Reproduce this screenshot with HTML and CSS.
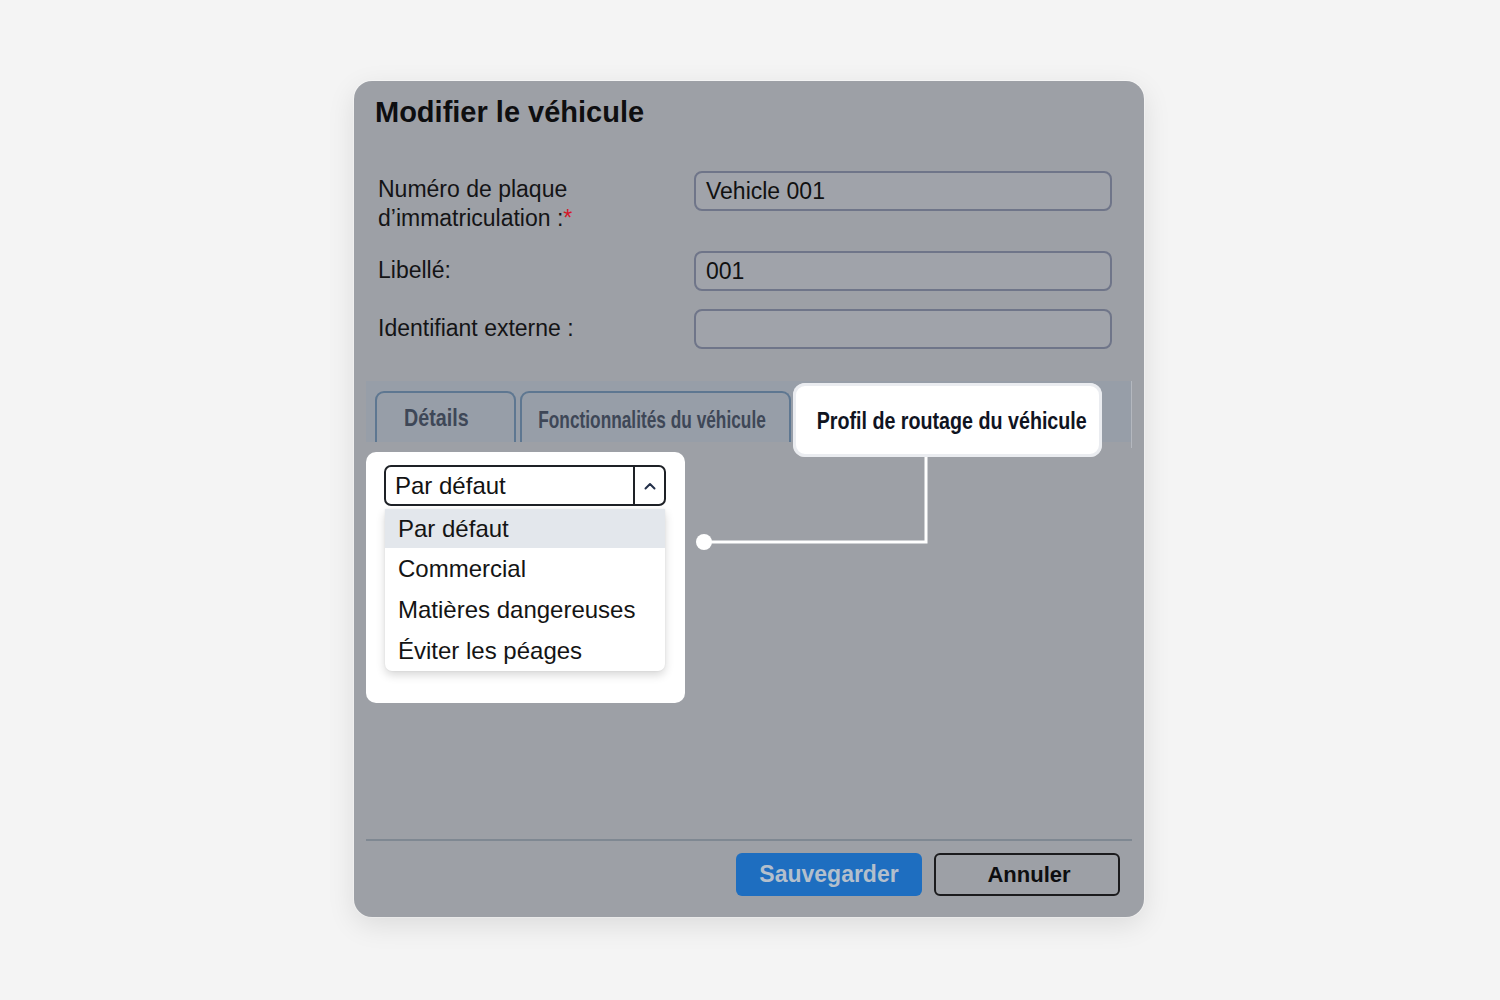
FILE: index.html
```
<!DOCTYPE html>
<html lang="fr">
<head>
<meta charset="utf-8">
<title>Modifier le véhicule</title>
<link rel="stylesheet" href="styles.css">
</head>
<body>
<div class="page">
  <div class="dialog">
    <h1 class="title">Modifier le véhicule</h1>
    <div class="form">
      <div class="row row-plate">
        <label class="label">Numéro de plaque<br>d’immatriculation :<span class="req">*</span></label>
        <div class="input">Vehicle 001</div>
      </div>
      <div class="row row-label">
        <label class="label">Libellé:</label>
        <div class="input">001</div>
      </div>
      <div class="row row-ext">
        <label class="label">Identifiant externe :</label>
        <div class="input"></div>
      </div>
    </div>
    <div class="tabs">
      <div class="tab tab-details"><span class="tab-text">Détails</span></div>
      <div class="tab tab-features"><span class="tab-text">Fonctionnalités du véhicule</span></div>
      <div class="tab tab-active"><span class="tab-text">Profil de routage du véhicule</span></div>
      <div class="tabs-rest"></div>
    </div>
    <div class="body">
      <div class="spot">
        <div class="select">
          <span class="select-value">Par défaut</span>
          <span class="select-arrow">
            <svg width="12" height="8" viewBox="0 0 12 8"><path d="M1.5 6.5 L6 2 L10.5 6.5" fill="none" stroke="#24304a" stroke-width="2" stroke-linecap="round" stroke-linejoin="round"/></svg>
          </span>
        </div>
        <ul class="options">
          <li class="option selected">Par défaut</li>
          <li class="option">Commercial</li>
          <li class="option">Matières dangereuses</li>
          <li class="option">Éviter les péages</li>
        </ul>
      </div>
    </div>
    <div class="footer">
      <button class="btn btn-save">Sauvegarder</button>
      <button class="btn btn-cancel">Annuler</button>
    </div>
    <svg class="callout" width="790" height="836" viewBox="0 0 790 836">
      <path d="M572 376 L572 461 L350 461" fill="none" stroke="#ffffff" stroke-width="3"/>
      <circle cx="350" cy="461" r="8" fill="#ffffff"/>
    </svg>
  </div>
</div>
</body>
</html>
```
FILE: styles.css
```
* { box-sizing: border-box; }
html, body { margin: 0; padding: 0; }
body {
  background: #f4f4f4;
  font-family: "Liberation Sans", Arial, sans-serif;
  color: #141414;
}
.page {
  width: 1500px;
  height: 1000px;
  padding-top: 81px;
  padding-left: 354px;
}
.dialog {
  position: relative;
  width: 790px;
  height: 836px;
  background: #9da0a6;
  border-radius: 18px;
  box-shadow: 0 8px 28px rgba(0,0,0,0.10), 0 0 0 1px rgba(255,255,255,0.6);
  display: flex;
  flex-direction: column;
}
.title {
  margin: 0;
  padding: 14px 0 0 21px;
  font-size: 29px;
  line-height: 34px;
  font-weight: bold;
  color: #0e0e10;
  height: 90px;
}
.form {
  padding: 0 32px 0 24px;
}
.row {
  display: flex;
  align-items: flex-start;
}
.row-plate { height: 80px; }
.row-label { height: 58px; }
.row-ext { height: 40px; }
.label {
  width: 316px;
  font-size: 23px;
  line-height: 29px;
  color: #141416;
  padding-top: 5px;
}
.row-plate .label { padding-top: 4px; }
.req { color: #d3182a; }
.input {
  flex: 1;
  height: 40px;
  border: 2px solid #6f7589;
  border-radius: 8px;
  background: #a0a3aa;
  font-size: 23px;
  line-height: 36px;
  padding-left: 10px;
  color: #111;
}
.tabs {
  margin: 32px 12px 0 12px;
  height: 61px;
  background: #979ea8;
  display: flex;
  align-items: flex-start;
  padding: 10px 0 0 9px;
  position: relative;
}
.tab {
  font-family: "Liberation Sans", Arial, sans-serif;
  font-weight: bold;
  font-size: 24px;
  height: 51px;
  border: 2px solid #5e7791;
  border-bottom: none;
  border-radius: 9px 9px 0 0;
  color: #3e4757;
  display: flex;
  align-items: center;
  justify-content: center;
  margin-right: 4px;
  white-space: nowrap;
}
.tab-text {
  display: inline-block;
  transform: scaleX(0.82);
  white-space: nowrap;
  margin: 0 -40px;
}
.tab-details { width: 141px; padding-right: 18px; }
.tab-features { width: 271px; padding-top: 4px; padding-right: 6px; }
.tab-features .tab-text { transform: scaleX(0.72); }
.tab-active {
  width: 309px;
  height: 74px;
  margin-top: -8px;
  margin-left: -2px;
  background: #ffffff;
  border: none;
  border-radius: 12px;
  color: #10141f;
  padding: 2px 0 0 8px;
  box-shadow: inset 0 0 0 3px rgba(220,224,230,0.6);
}
.tabs-rest {
  flex: 1;
  align-self: stretch;
  border-right: 1px solid #b4b8bf;
  margin-top: -10px;
  height: 67px;
}
.body {
  flex: 1;
  padding: 10px 0 0 0;
  border-bottom: 2px solid #7f8892;
  margin: 0 12px;
}
.spot {
  width: 319px;
  height: 251px;
  background: #ffffff;
  border-radius: 10px;
  padding: 13px 19px 0 18px;
}
.select {
  height: 41px;
  border: 2px solid #1e2126;
  border-radius: 7px;
  display: flex;
  align-items: center;
}
.select-value {
  flex: 1;
  font-size: 24px;
  padding-left: 9px;
  color: #121212;
}
.select-arrow {
  width: 31px;
  height: 100%;
  border-left: 2px solid #1e2126;
  display: flex;
  align-items: center;
  justify-content: center;
}
.options {
  list-style: none;
  margin: 3px 0 0 1px;
  padding: 0;
  width: 280px;
  background: #ffffff;
  border-radius: 0 0 7px 7px;
  box-shadow: 0 4px 10px rgba(0,0,0,0.16), 0 0 2px rgba(0,0,0,0.08);
}
.option {
  height: 41px;
  font-size: 24px;
  line-height: 42px;
  padding-left: 13px;
  color: #141414;
}
.option.selected {
  background: #e3e7ec;
  height: 39px;
  line-height: 39px;
}
.footer {
  height: 76px;
  display: flex;
  justify-content: flex-end;
  align-items: flex-start;
  padding: 12px 24px 0 0;
  gap: 12px;
}
.btn {
  width: 186px;
  height: 43px;
  font-family: "Liberation Sans", Arial, sans-serif;
  font-weight: bold;
  font-size: 23px;
  border-radius: 6px;
  cursor: pointer;
}
.btn-save {
  background: #1e6ec0;
  border: none;
  color: #b3bfcc;
}
.btn-cancel {
  background: transparent;
  border: 2px solid #1b1b1d;
  color: #0e0e10;
  font-size: 22px;
  padding-left: 10px;
}
.callout {
  position: absolute;
  left: 0;
  top: 0;
  pointer-events: none;
}
```
